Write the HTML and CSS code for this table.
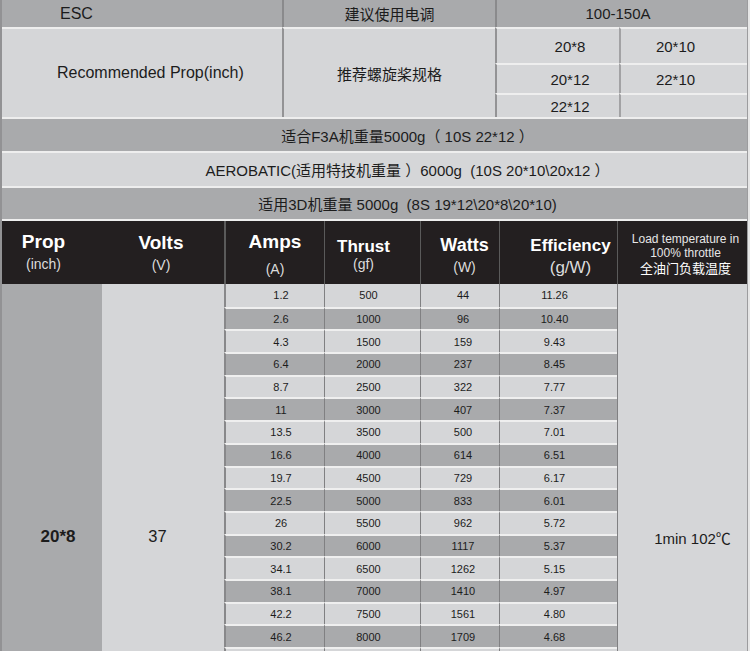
FILE: index.html
```html
<!DOCTYPE html>
<html lang="zh">
<head>
<meta charset="utf-8">
<title>Motor test data</title>
<link rel="stylesheet" href="styles.css">
</head>
<body>
<div class="sheet">
  <div class="spec">
    <div class="cell dark esc-l">ESC</div>
    <div class="cell dark esc-c">建议使用电调</div>
    <div class="cell dark esc-v">100-150A</div>
    <div class="cell light prop-l">Recommended Prop(inch)</div>
    <div class="cell light prop-c">推荐螺旋桨规格</div>
    <div class="cell size sl">20*8</div>
    <div class="cell size sr">20*10</div>
    <div class="cell size sl">20*12</div>
    <div class="cell size sr">22*10</div>
    <div class="cell size sl">22*12</div>
    <div class="cell size sr"></div>
  </div>

  <div class="banner dark b1">适合F3A机重量5000g（ 10S 22*12 ）</div>
  <div class="banner light b2">AEROBATIC(适用特技机重量 ）6000g&nbsp; (10S 20*10\20x12 ）</div>
  <div class="banner dark b3">适用3D机重量 5000g&nbsp; (8S 19*12\20*8\20*10)</div>

  <div class="data">
    <div class="h h-prop"><div class="ht">Prop</div><div class="hu">(inch)</div></div>
    <div class="h h-volts"><div class="ht">Volts</div><div class="hu">(V)</div></div>
    <div class="h h-amps"><div class="ht">Amps</div><div class="hu">(A)</div></div>
    <div class="h h-thrust"><div class="ht">Thrust</div><div class="hu">(gf)</div></div>
    <div class="h h-watts"><div class="ht">Watts</div><div class="hu">(W)</div></div>
    <div class="h h-eff"><div class="ht">Efficiency</div><div class="hu">(g/W)</div></div>
    <div class="h h-temp"><div class="en">Load temperature in<br>100% throttle</div><div class="cn">全油门负载温度</div></div>

    <div class="pv">20*8</div>
    <div class="vv">37</div>
    <div class="tv">1min 102℃</div>

    <div class="r"><div class="a">1.2</div><div class="t">500</div><div class="w">44</div><div class="e">11.26</div></div>
    <div class="r dk"><div class="a">2.6</div><div class="t">1000</div><div class="w">96</div><div class="e">10.40</div></div>
    <div class="r"><div class="a">4.3</div><div class="t">1500</div><div class="w">159</div><div class="e">9.43</div></div>
    <div class="r dk"><div class="a">6.4</div><div class="t">2000</div><div class="w">237</div><div class="e">8.45</div></div>
    <div class="r"><div class="a">8.7</div><div class="t">2500</div><div class="w">322</div><div class="e">7.77</div></div>
    <div class="r dk"><div class="a">11</div><div class="t">3000</div><div class="w">407</div><div class="e">7.37</div></div>
    <div class="r"><div class="a">13.5</div><div class="t">3500</div><div class="w">500</div><div class="e">7.01</div></div>
    <div class="r dk"><div class="a">16.6</div><div class="t">4000</div><div class="w">614</div><div class="e">6.51</div></div>
    <div class="r"><div class="a">19.7</div><div class="t">4500</div><div class="w">729</div><div class="e">6.17</div></div>
    <div class="r dk"><div class="a">22.5</div><div class="t">5000</div><div class="w">833</div><div class="e">6.01</div></div>
    <div class="r"><div class="a">26</div><div class="t">5500</div><div class="w">962</div><div class="e">5.72</div></div>
    <div class="r dk"><div class="a">30.2</div><div class="t">6000</div><div class="w">1117</div><div class="e">5.37</div></div>
    <div class="r"><div class="a">34.1</div><div class="t">6500</div><div class="w">1262</div><div class="e">5.15</div></div>
    <div class="r dk"><div class="a">38.1</div><div class="t">7000</div><div class="w">1410</div><div class="e">4.97</div></div>
    <div class="r"><div class="a">42.2</div><div class="t">7500</div><div class="w">1561</div><div class="e">4.80</div></div>
    <div class="r dk"><div class="a">46.2</div><div class="t">8000</div><div class="w">1709</div><div class="e">4.68</div></div>
    <div class="r"><div class="a"></div><div class="t"></div><div class="w"></div><div class="e"></div></div>
  </div>
</div>
</body>
</html>
```

FILE: styles.css
```css
* { box-sizing: border-box; }

body {
  margin: 0;
  background: #e6e6e6;
  font-family: "Liberation Sans", Arial, "Noto Sans CJK SC", sans-serif;
  color: #1c1c1c;
}

.sheet {
  width: 748px;
  border-left: 2px solid #929294;
  border-right: 1px solid #9c9c9e;
}

.dark { background: #a9aaac; }
.light { background: #d5d6d8; }

/* ---------- top spec block ---------- */
.spec {
  display: grid;
  grid-template-columns: 280px 213px 124px 128px;
  grid-template-rows: 27px 36px 30px 24px;
  font-size: 15px;
}

.cell {
  display: flex;
  align-items: center;
  justify-content: center;
}

.esc-l {
  justify-content: flex-start;
  padding-left: 58px;
  font-size: 16px;
}

.esc-c { border-left: 2px solid #8a8a8c; }

.esc-v {
  grid-column: 3 / span 2;
  border-left: 2px solid #8a8a8c;
  padding-right: 8px;
}

.prop-l {
  grid-row: 2 / span 3;
  justify-content: flex-start;
  padding-left: 55px;
  font-size: 16px;
  border-top: 2px solid #eeeeee;
}

.prop-c {
  grid-row: 2 / span 3;
  border-left: 2px solid #939395;
  border-top: 2px solid #eeeeee;
}

.size {
  background: #d5d6d8;
  border-top: 2px solid #eeeeee;
}

.sl {
  grid-column: 3;
  border-left: 2px solid #939395;
  padding-left: 24px;
}

.sr {
  grid-column: 4;
  border-left: 2px solid #a2a2a4;
  padding-right: 17px;
}

/* ---------- banners ---------- */
.banner {
  display: flex;
  align-items: center;
  justify-content: center;
  padding-left: 66px;
  font-size: 15px;
  border-top: 2px solid #eeeeee;
  white-space: pre;
}

.b1 { height: 34px; }
.b2 { height: 35px; }
.b3 { height: 35px; border-bottom: 2px solid #eeeeee; }

/* ---------- data table ---------- */
.data {
  display: grid;
  grid-template-columns: 100px 122px 100px 96px 79px 118px 130px;
  grid-template-rows: 63px repeat(22, 22.7px);
}

.h {
  grid-row: 1;
  background: #231f20;
  color: #ffffff;
  text-align: center;
}

.ht { font-weight: bold; }
.hu { color: #dcdcdc; font-size: 14px; line-height: 16px; }

.h-prop { padding-top: 11px; padding-right: 17px; }
.h-prop .ht { font-size: 19px; line-height: 20px; }
.h-prop .hu { margin-top: 4px; }

.h-volts { padding-top: 12px; padding-right: 4px; }
.h-volts .ht { font-size: 19px; line-height: 20px; }
.h-volts .hu { margin-top: 4px; }

.h-amps { padding-top: 11px; border-left: 2px solid #5a5a5a; }
.h-amps .ht { font-size: 19px; line-height: 20px; }
.h-amps .hu { margin-top: 9px; }

.h-thrust { padding-top: 17px; padding-right: 18px; border-left: 1px solid #5a5a5a; }
.h-thrust .ht { font-size: 17px; line-height: 18px; }

.h-watts { padding-top: 15px; padding-left: 9px; border-left: 1px solid #5a5a5a; }
.h-watts .ht { font-size: 18px; line-height: 19px; }
.h-watts .hu { margin-top: 4px; }

.h-eff { padding-top: 16px; padding-left: 24px; border-left: 1px solid #5a5a5a; }
.h-eff .ht { font-size: 17px; line-height: 18px; }
.h-eff .hu { margin-top: 4px; font-size: 17px; line-height: 18px; }

.h-temp { padding-top: 12px; padding-left: 6px; border-left: 1px solid #5a5a5a; }
.h-temp .en { font-size: 12px; line-height: 13.5px; color: #e6e6e6; }
.h-temp .cn { font-size: 13px; line-height: 17px; }

.pv, .vv, .tv {
  grid-row: 2 / span 22;
  display: flex;
  align-items: center;
  justify-content: center;
}

.pv {
  grid-column: 1;
  background: #a9aaac;
  font-size: 17px;
  font-weight: bold;
  padding-left: 12px;
  padding-top: 7px;
}

.vv {
  grid-column: 2;
  background: #d5d6d8;
  font-size: 16.5px;
  padding-right: 11px;
  padding-top: 6px;
}

.tv {
  grid-column: 7;
  background: #d5d6d8;
  border-left: 1px solid #808082;
  font-size: 15px;
  padding-left: 20px;
  padding-top: 8px;
}

.r { display: contents; }

.r > div {
  display: flex;
  align-items: center;
  justify-content: center;
  font-size: 11px;
  background: #d5d6d8;
  border-left: 1px solid #808082;
}

.r.dk > div { background: #a9aaac; }

.r + .r > div { border-top: 2px solid #efefef; }

.r > .a { grid-column: 3; padding-left: 12px; border-left: 2px solid #88888a; }
.r > .t { grid-column: 4; padding-right: 8px; }
.r > .w { grid-column: 5; padding-left: 6px; }
.r > .e { grid-column: 6; padding-right: 8px; }
```
